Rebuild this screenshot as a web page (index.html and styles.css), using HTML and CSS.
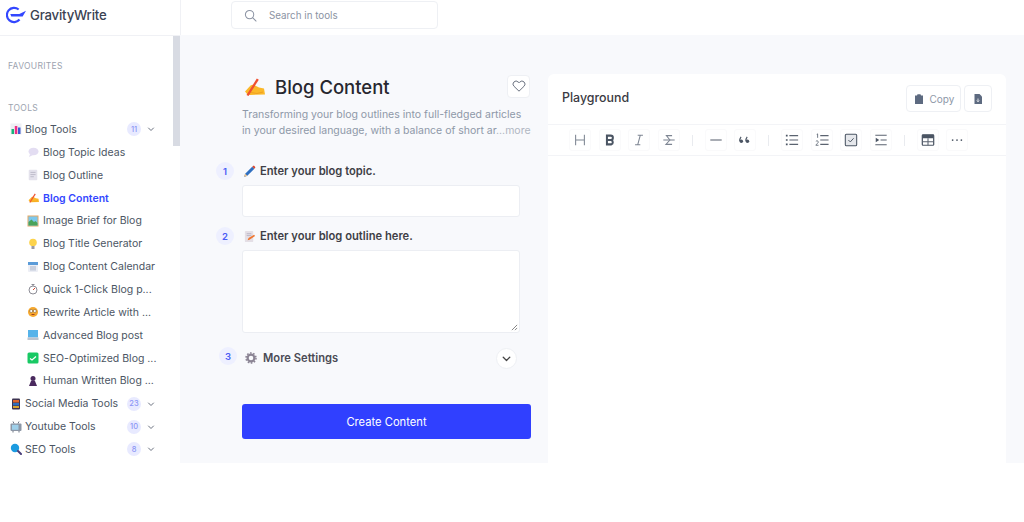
FILE: index.html
```html
<!DOCTYPE html>
<html lang="en">
<head>
<meta charset="utf-8">
<title>Blog Content</title>
<link rel="stylesheet" href="styles.css">
</head>
<body>
<svg class="defs" width="0" height="0" aria-hidden="true">
  <symbol id="chev" viewBox="0 0 10 10"><path d="M2.500 4 5 6.500 7.500 4" fill="none" stroke="currentColor" stroke-width="1" stroke-linecap="round" stroke-linejoin="round"/></symbol>
  <symbol id="hand" viewBox="0 0 23 20"><path d="M3 14.500 8.500 8.500C10 7.500 11.500 7.500 13 8.500L17 10.500 22 11.500 23 17.500 8 18 5.500 17.500Z" fill="#fbb829"/><path d="M4.500 18 14.800 1.500 16.800 2.800 6.500 19Z" fill="#ef5030"/><path d="M9 15.500 15 16.500 21 15" stroke="#f0a020" stroke-width="1" fill="none"/></symbol>
  <symbol id="memo" viewBox="0 0 14 14"><rect x="2" y="1" width="10" height="12" rx="1" fill="#e4e2ec"/><path d="M4 4H10M4 6.500H10M4 9H8" stroke="#b9b6c6"/></symbol>
</svg>
<div class="page">
  <header class="topbar">
    <div class="brand">
      <svg class="brand-mark" viewBox="0 0 21 18"><path d="M13.300 3.250A7.500 7.500 0 1 0 14.200 13.800" fill="none" stroke="#3347ff" stroke-width="2.300"/><path d="M4.500 8H14L21 4.500 17.500 10.500H5.500Z" fill="#3347ff"/></svg>
      <span class="brand-name">GravityWrite</span>
    </div>
    <div class="topbar-search">
      <div class="search">
        <svg class="search-icon" viewBox="0 0 14 14"><circle cx="6" cy="6" r="4.500" fill="none" stroke="#8b93a3" stroke-width="1.100"/><path d="M9.500 9.500 13 13" stroke="#8b93a3" stroke-width="1.100" stroke-linecap="round"/></svg>
        <span>Search in tools</span>
      </div>
    </div>
  </header>
  <div class="body">
    <aside class="sidebar">
      <span class="thumb"></span>
      <p class="side-label fav">FAVOURITES</p>
      <p class="side-label tools">TOOLS</p>
      <ul class="nav">
        <li class="group"><svg class="ic" viewBox="0 0 12 12"><rect x="0.500" y="0.500" width="11" height="11" fill="#eef0f4"/><rect x="1.500" y="6" width="2.500" height="5" fill="#18b37a"/><rect x="4.800" y="3" width="2.500" height="8" fill="#ee2f86"/><rect x="8" y="4.500" width="2.500" height="6.500" fill="#3c5bd0"/></svg><span class="g-name">Blog Tools</span><span class="count">11</span><svg class="chev"><use href="#chev"/></svg></li>
        <li class="item"><svg class="ic" viewBox="0 0 12 12"><ellipse cx="6.500" cy="5.500" rx="5" ry="3.800" fill="#e3ddf2"/><path d="M3 8 2 11 6 9Z" fill="#e3ddf2"/></svg><span>Blog Topic Ideas</span></li>
        <li class="item"><svg class="ic"><use href="#memo"/></svg><span>Blog Outline</span></li>
        <li class="item active"><svg class="ic"><use href="#hand"/></svg><span>Blog Content</span></li>
        <li class="item"><svg class="ic" viewBox="0 0 12 12"><rect x="0.500" y="0.500" width="11" height="11" fill="#e2a866"/><rect x="1.500" y="1.500" width="9" height="9" fill="#7cc8ee"/><path d="M1.500 10.500V7L4.500 4.500 7 7 8.500 6 10.500 8V10.500Z" fill="#4aa35a"/></svg><span>Image Brief for Blog</span></li>
        <li class="item"><svg class="ic" viewBox="0 0 12 12"><circle cx="6" cy="4.500" r="3.800" fill="#fcd34d"/><rect x="4.500" y="8" width="3" height="3" fill="#9a9aa5"/></svg><span>Blog Title Generator</span></li>
        <li class="item"><svg class="ic" viewBox="0 0 12 12"><rect x="1" y="1" width="10" height="10" rx="1" fill="#eceef5"/><rect x="1" y="1" width="10" height="3" fill="#5b9bd8"/><path d="M3 6H9M3 8H9M4 5V10M6 5V10M8 5V10" stroke="#aab1c6" stroke-width="0.600"/></svg><span>Blog Content Calendar</span></li>
        <li class="item"><svg class="ic" viewBox="0 0 12 12"><circle cx="6" cy="7" r="4" fill="#fff" stroke="#8d8d96"/><path d="M6 7 8 5" stroke="#d8442c"/><path d="M4.500 1.500H7.500M6 1.500V3" stroke="#8d8d96"/></svg><span>Quick 1-Click Blog p...</span></li>
        <li class="item"><svg class="ic" viewBox="0 0 12 12"><circle cx="6" cy="6" r="5" fill="#f6a82e"/><circle cx="4.200" cy="5" r="1.500" fill="#fff" stroke="#6b4a1e" stroke-width="0.500"/><circle cx="7.800" cy="5" r="1.500" fill="#fff" stroke="#6b4a1e" stroke-width="0.500"/><path d="M4.500 8.500H7.500" stroke="#a3441e"/></svg><span>Rewrite Article with ...</span></li>
        <li class="item"><svg class="ic" viewBox="0 0 12 12"><rect x="1" y="1" width="10" height="7.500" fill="#56b3ea"/><rect x="0.500" y="8.500" width="11" height="2.500" fill="#bcc4cf"/></svg><span>Advanced Blog post</span></li>
        <li class="item"><svg class="ic" viewBox="0 0 12 12"><rect x="0.500" y="0.500" width="11" height="11" rx="1.500" fill="#18c964"/><path d="M3 6.500 5 8 9 4.500" fill="none" stroke="#fff" stroke-width="1.200"/></svg><span>SEO-Optimized Blog ...</span></li>
        <li class="item"><svg class="ic" viewBox="0 0 12 12"><circle cx="6" cy="3.500" r="2.500" fill="#4a2a5e"/><path d="M2 11 4 6H8L10 11Z" fill="#4a2a5e"/></svg><span>Human Written Blog ...</span></li>
        <li class="group"><svg class="ic" viewBox="0 0 12 12"><rect x="2" y="0.500" width="8" height="11" rx="1" fill="#3d3350"/><rect x="3" y="2" width="6" height="2.500" fill="#e0662e"/><rect x="3" y="5" width="6" height="2.500" fill="#2f6fc0"/><rect x="3" y="8" width="6" height="2" fill="#d8a22e"/></svg><span class="g-name">Social Media Tools</span><span class="count">23</span><svg class="chev"><use href="#chev"/></svg></li>
        <li class="group"><svg class="ic" viewBox="0 0 12 12"><rect x="0.500" y="2.500" width="11" height="7.500" rx="1" fill="#8d97a6"/><rect x="2" y="3.800" width="6.500" height="5" fill="#9fd0ea"/><path d="M4 2.500 3 0.500M8 2.500 9 0.500M3 10V11.500M9 10V11.500" stroke="#6e7684"/></svg><span class="g-name">Youtube Tools</span><span class="count">10</span><svg class="chev"><use href="#chev"/></svg></li>
        <li class="group"><svg class="ic" viewBox="0 0 12 12"><circle cx="5" cy="5" r="4.200" fill="#1c9be0"/><path d="M8 8 11 11" stroke="#4a3f7a" stroke-width="2" stroke-linecap="round"/></svg><span class="g-name">SEO Tools</span><span class="count">8</span><svg class="chev"><use href="#chev"/></svg></li>
      </ul>
    </aside>
    <main class="main">
      <section class="form">
        <div class="hero">
          <div class="title-row">
            <svg class="title-ic"><use href="#hand"/></svg>
            <h1>Blog Content</h1>
            <button class="heart" type="button"><svg viewBox="0 0 14 14"><path d="M7 12.200 1.900 7.200A3 3 0 0 1 6.200 3L7 3.800 7.800 3A3 3 0 0 1 12.100 7.200Z" fill="none" stroke="#6b7280" stroke-width="1"/></svg></button>
          </div>
          <p class="desc">Transforming your blog outlines into full-fledged articles<br>in your desired language, with a balance of short ar<span class="more">...more</span></p>
        </div>
        <div class="step s1">
          <span class="num">1</span>
          <div class="step-body">
            <label class="lbl"><svg class="lbl-ic" viewBox="0 0 12 12"><path d="M1 11 2 8 8.500 1.500 10.500 3.500 4 10Z" fill="#2f6fc0"/><path d="M1 11 2 8 4 10Z" fill="#f0c48a"/><path d="M8.500 1.500 10 0.500 11.500 2 10.500 3.500Z" fill="#d8442c"/></svg>Enter your blog topic.</label>
            <div class="field"></div>
          </div>
        </div>
        <div class="step s2">
          <span class="num">2</span>
          <div class="step-body">
            <label class="lbl"><svg class="lbl-ic" viewBox="0 0 14 14"><rect x="2" y="1" width="9" height="12" rx="1" fill="#e4dfe6"/><path d="M4 4H9M4 6H9" stroke="#b9b6c6"/><path d="M5 11 6 8.500 12 5 13 6.500 7 10.500Z" fill="#f0762f"/></svg>Enter your blog outline here.</label>
            <div class="field tall"><svg class="grip" viewBox="0 0 8 8"><path d="M1 7 7 1M4.500 7 7 4.500" stroke="#555" stroke-width="0.800"/></svg></div>
          </div>
        </div>
        <div class="step s3">
          <span class="num">3</span>
          <div class="settings">
            <svg class="gear" viewBox="0 0 12 12"><circle cx="6" cy="6" r="3.400" fill="none" stroke="#8b8494" stroke-width="2.200"/><circle cx="6" cy="6" r="5" fill="none" stroke="#8b8494" stroke-width="1.500" stroke-dasharray="1.600 1.540"/></svg>
            <span class="settings-text">More Settings</span>
            <span class="round"><svg class="round-chev"><use href="#chev"/></svg></span>
          </div>
        </div>
        <button class="cta" type="button">Create Content</button>
      </section>
      <section class="play">
        <div class="play-head">
          <h2>Playground</h2>
          <div class="play-actions">
            <button class="act copy" type="button"><svg viewBox="0 0 12 12"><path d="M2 2.500H4L4.500 1.200H7.500L8 2.500H10V11H2Z" fill="#5d6a80"/></svg>Copy</button>
            <button class="act dl" type="button"><svg viewBox="0 0 12 12"><path d="M2.500 1H7.500L10 3.500V11H2.500Z" fill="#5d6a80"/><path d="M6 5.500V8.500M4.800 7.500 6 8.800 7.200 7.500" stroke="#fff" stroke-width="0.800" fill="none"/></svg></button>
          </div>
        </div>
        <div class="toolbar">
          <span class="tb"><svg viewBox="0 0 16 16"><path d="M3 2V14M13 2V14M3 8H13" class="st lt"/></svg></span>
          <span class="tb"><svg viewBox="0 0 16 16"><path d="M4.500 3H8.800A2.500 2.500 0 0 1 8.800 8H4.500ZM4.500 8H9.500A2.700 2.700 0 0 1 9.500 13H4.500Z" fill="none" stroke="#4b5563" stroke-width="2.300"/></svg></span>
          <span class="tb"><svg viewBox="0 0 16 16"><path d="M6.500 2.500H12.500M3.500 13.500H9.500M9.500 2.500 6.500 13.500" class="st lt"/></svg></span>
          <span class="tb"><svg viewBox="0 0 16 16"><path d="M1.500 8H14.500" class="st lt"/><path d="M11.500 3H5L9 8 4.500 13H11.500" class="st lt"/></svg></span>
          <i class="sep"></i>
          <span class="tb"><svg viewBox="0 0 16 16"><path d="M1.500 8H14.500" class="st" stroke-width="1.500"/></svg></span>
          <span class="tb"><svg viewBox="0 0 16 16"><path d="M3.500 4.500C2.500 5.800 2 7 2 9" fill="none" stroke="#4b5563" stroke-width="1.300"/><circle cx="3.800" cy="9.500" r="2" fill="#4b5563"/><path d="M10.500 4.500C9.500 5.800 9 7 9 9" fill="none" stroke="#4b5563" stroke-width="1.300"/><circle cx="10.800" cy="9.500" r="2" fill="#4b5563"/></svg></span>
          <i class="sep"></i>
          <span class="tb"><svg viewBox="0 0 16 16"><path d="M5 3H15M5 8H15M5 13H15" class="st"/><path d="M1 3H3M1 8H3M1 13H3" stroke="#4b5563" stroke-width="1.800"/></svg></span>
          <span class="tb"><svg viewBox="0 0 16 16"><path d="M6 3H15.500M6 8H15.500M6 13H15.500" class="st"/><path d="M2 1.500 3 1V5.500M1 9.500C2 8.500 4 9 3.700 10.500 3.500 11.500 1.800 12.500 1 14H4" fill="none" stroke="#4b5563" stroke-width="0.900"/></svg></span>
          <span class="tb"><svg viewBox="0 0 16 16"><rect x="1.500" y="1.500" width="13" height="13" rx="1.200" fill="#e5e7eb" stroke="#4b5563" stroke-width="1.200"/><path d="M5 8 7.200 10.200 11 6" fill="none" stroke="#4b5563" stroke-width="1.100"/></svg></span>
          <span class="tb"><svg viewBox="0 0 16 16"><path d="M1.500 2.500H14.500M7.500 8H14.500M1.500 13.500H14.500" class="st"/><path d="M2 5.500 6 8 2 10.500Z" fill="#4b5563"/></svg></span>
          <i class="sep"></i>
          <span class="tb"><svg viewBox="0 0 16 16"><rect x="1.500" y="2" width="13" height="12" rx="1" fill="none" stroke="#4b5563" stroke-width="1.400"/><path d="M1.500 2H14.500V6H1.500Z" fill="#4b5563"/><path d="M8 6V14M1.500 10H14.500" class="st" stroke-width="1.400"/></svg></span>
          <span class="tb"><svg viewBox="0 0 16 16"><circle cx="3" cy="8" r="1" fill="#4b5563"/><circle cx="8" cy="8" r="1" fill="#4b5563"/><circle cx="13" cy="8" r="1" fill="#4b5563"/></svg></span>
        </div>
      </section>
    </main>
  </div>
</div>
</body>
</html>
```
FILE: styles.css
```css
* { box-sizing: border-box; }
html, body { margin: 0; padding: 0; background: #fff; }
body { font-family: Inter, "Liberation Sans", sans-serif; color: #374151; overflow: hidden; }
.defs { display: block; height: 0; }
p, h1, h2, ul { margin: 0; padding: 0; }
ul { list-style: none; }
button { font-family: inherit; border: 0; padding: 0; }

.page { width: 1024px; height: 463px; display: flex; flex-direction: column; overflow: hidden; }

.topbar { height: 35px; flex: none; display: flex; background: #fff; }
.brand { width: 181px; flex: none; display: flex; align-items: center; gap: 4px; padding: 0 0 5px 6px; border-right: 1px solid #f0f1f5; }
.brand-mark { width: 20px; height: 18px; }
.brand-name { font-size: 13.200px; font-weight: 500; color: #3b4252; letter-spacing: -0.200px; }
.topbar-search { padding: 1px 0 0 50px; }
.search { width: 207px; height: 28px; display: flex; align-items: center; gap: 12px; padding-left: 12px; border: 1px solid #eef0f4; border-radius: 4px; font-size: 9.800px; color: #8b93a3; }
.search-icon { width: 13px; height: 13px; }

.body { flex: 1; min-height: 0; display: flex; }

.sidebar { position: relative; width: 180px; flex: none; background: #fff; border-top: 1px solid #f0f1f5; overflow: hidden; }
.thumb { position: absolute; top: 0; right: 0; width: 7px; height: 110px; background: #d8dbe3; }
.side-label { font-size: 8.500px; font-weight: 400; letter-spacing: 0.300px; color: #9ca3af; padding-left: 8px; line-height: 12px; }
.fav { padding-top: 24px; }
.tools { padding-top: 30px; }
.nav { padding-top: 4px; }
.group, .item { height: 22.860px; display: flex; align-items: center; font-size: 10.500px; color: #4b5563; white-space: nowrap; }
.group { padding-left: 10px; }
.item { padding-left: 27px; }
.ic { width: 12px; height: 12px; flex: none; margin-right: 4px; }
.group .ic { margin-right: 3px; }
.g-name { width: 102px; flex: none; }
.count { width: 14px; height: 14px; border-radius: 50%; background: #e8eaff; color: #8b95f5; font-size: 7.500px; font-weight: 500; display: flex; align-items: center; justify-content: center; }
.chev { width: 10px; height: 10px; margin-left: 5px; color: #6b7280; }
.active { color: #3347ff; font-weight: 600; }

.main { flex: 1; min-width: 0; display: flex; gap: 17px; padding: 39px 18px 0 36px; background: #f8f9fc; overflow: hidden; }
.form { width: 315px; flex: none; }
.hero { padding-left: 26px; }
.title-row { display: flex; align-items: center; height: 26px; }
.title-ic { width: 23px; height: 20px; margin-right: 10px; }
h1 { flex: 1; font-size: 18.500px; font-weight: 500; color: #27272f; line-height: 28px; }
.heart { width: 23px; height: 23px; margin-top: -2px; margin-right: 1px; background: #fff; border: 1px solid #eef0f4; border-radius: 4px; display: flex; align-items: center; justify-content: center; }
.heart svg { width: 14px; height: 14px; }
.desc { margin-top: 7px; font-size: 10.500px; line-height: 15.500px; color: #8e98a8; white-space: nowrap; }
.more { color: #b0b6c2; }

.step { display: flex; gap: 8px; align-items: flex-start; }
.s1 { margin-top: 24px; }
.s2 { margin-top: 10px; }
.s3 { margin-top: 14px; padding-left: 3px; }
.num { width: 18px; height: 18px; flex: none; border-radius: 50%; background: #eef0ff; color: #4a5cf5; font-size: 9.500px; font-weight: 600; display: flex; align-items: center; justify-content: center; }
.step-body { width: 278px; }
.lbl { display: flex; align-items: center; height: 18px; font-size: 11.200px; font-weight: 600; color: #3f3f46; }
.lbl-ic { width: 13px; height: 13px; margin: 0 4px 0 1px; }
.field { height: 32px; margin-top: 5px; background: #fff; border: 1px solid #eceef3; border-radius: 3px; }
.tall { height: 83px; margin-top: 5px; display: flex; align-items: flex-end; justify-content: flex-end; padding: 0 1px 1px 0; }
.grip { width: 7px; height: 7px; }

.settings { width: 273px; display: flex; align-items: center; height: 20px; margin-top: 1px; }
.gear { width: 12px; height: 12px; margin-right: 6px; }
.settings-text { flex: 1; font-size: 11.200px; font-weight: 600; color: #4b4b55; }
.round { width: 21px; height: 21px; border-radius: 50%; background: #fff; border: 1px solid #eef0f4; display: flex; align-items: center; justify-content: center; margin-right: 1px; }
.round-chev { width: 13px; height: 13px; color: #444; }

.cta { display: block; width: 289px; height: 35px; margin: 36px 0 0 26px; background: #3040ff; color: #fff; font-size: 11.200px; font-weight: 400; border-radius: 3px; }

.play { flex: 1; background: #fff; border-radius: 6px 6px 0 0; min-width: 0; }
.play-head { height: 51px; display: flex; justify-content: space-between; padding: 12px 14px 0 14px; border-bottom: 1px solid #f3f4f7; }
h2 { font-size: 12.400px; font-weight: 500; color: #3a3a42; line-height: 24px; }
.play-actions { display: flex; gap: 3px; height: 27px; margin-top: -1px; }
.act { background: #fff; border: 1px solid #eef0f4; border-radius: 4px; display: flex; align-items: center; justify-content: center; color: #8e98a8; font-size: 10px; }
.act svg { width: 12px; height: 12px; }
.copy { width: 55px; gap: 5px; }
.dl { width: 28px; }
.toolbar { height: 31px; display: flex; align-items: center; gap: 7.500px; padding-left: 21px; border-bottom: 1px solid #f3f4f7; }
.tb { width: 22px; height: 22px; border: 1px solid #fafafb; border-radius: 3px; display: flex; align-items: center; justify-content: center; }
.tb svg { width: 14px; height: 14px; }
.st { fill: none; stroke: #5b6370; stroke-width: 1.200; }
.lt { stroke: #7d8592; }
.sep { width: 1px; height: 11px; background: #e9ebef; margin: 0 4.500px; }
```
